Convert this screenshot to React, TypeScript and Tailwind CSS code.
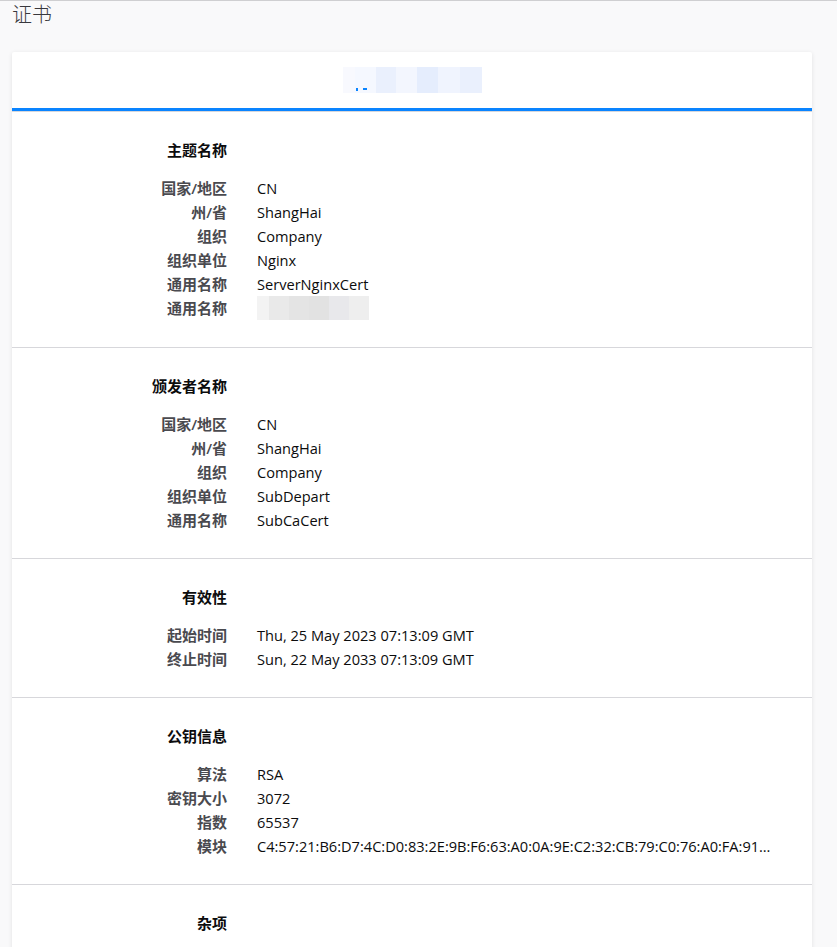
import React from 'react';

type Row = { label: string; value?: string; redacted?: boolean };
type Section = { title: string; rows: Row[] };

const sections: Section[] = [
  {
    title: '主题名称',
    rows: [
      { label: '国家/地区', value: 'CN' },
      { label: '州/省', value: 'ShangHai' },
      { label: '组织', value: 'Company' },
      { label: '组织单位', value: 'Nginx' },
      { label: '通用名称', value: 'ServerNginxCert' },
      { label: '通用名称', redacted: true },
    ],
  },
  {
    title: '颁发者名称',
    rows: [
      { label: '国家/地区', value: 'CN' },
      { label: '州/省', value: 'ShangHai' },
      { label: '组织', value: 'Company' },
      { label: '组织单位', value: 'SubDepart' },
      { label: '通用名称', value: 'SubCaCert' },
    ],
  },
  {
    title: '有效性',
    rows: [
      { label: '起始时间', value: 'Thu, 25 May 2023 07:13:09 GMT' },
      { label: '终止时间', value: 'Sun, 22 May 2033 07:13:09 GMT' },
    ],
  },
  {
    title: '公钥信息',
    rows: [
      { label: '算法', value: 'RSA' },
      { label: '密钥大小', value: '3072' },
      { label: '指数', value: '65537' },
      { label: '模块', value: 'C4:57:21:B6:D7:4C:D0:83:2E:9B:F6:63:A0:0A:9E:C2:32:CB:79:C0:76:A0:FA:91…' },
    ],
  },
  { title: '杂项', rows: [] },
];

const font = { fontFamily: '"Open Sans", "Noto Sans CJK SC", sans-serif' };

// blurred-out blocks, the screenshot had these pixelated
const Redacted: React.FC = () => (
  <div className="flex h-[24px] items-stretch">
    <div className="w-[12px] bg-[#f3f3f3]" />
    <div className="w-[20px] bg-[#e9e9e9]" />
    <div className="w-[20px] bg-[#e4e4e4]" />
    <div className="w-[20px] bg-[#e2e2e2]" />
    <div className="w-[20px] bg-[#e8e8eb]" />
    <div className="w-[20px] bg-[#eeeeee]" />
  </div>
);

const TabTitle: React.FC = () => (
  <div className="relative flex h-[26px] items-stretch">
    <div className="w-[12px] bg-[#f8f9fe]" />
    <div className="w-[21px] bg-[#f5f8ff]" />
    <div className="w-[20px] bg-[#eaf0fd]" />
    <div className="w-[21px] bg-[#f3f6fe]" />
    <div className="w-[21px] bg-[#e5edfd]" />
    <div className="w-[22px] bg-[#f0f4fe]" />
    <div className="w-[22px] bg-[#eaf0fd]" />
    <span className="absolute left-[13px] bottom-[2px] h-[3px] w-[2px] bg-[#0a84ff]" />
    <span className="absolute left-[20px] bottom-[3px] h-[2px] w-[4px] bg-[#0a84ff]" />
  </div>
);

export default function App() {
  return (
    <div className="min-h-[947px] border-t border-[#cfcfd1] bg-[#f9f9fa] text-[#15141a]" style={font}>
      <h1 className="px-[12px] pt-[1px] text-[20px] font-light leading-[26px] text-[#38383d]">证书</h1>
      <div className="mx-[12px] mt-[24px] w-[800px] rounded-t-[2px] bg-white shadow-[0_1px_4px_rgba(12,12,13,0.1)]">
        <div className="flex h-[56px] items-center justify-center">
          <TabTitle />
        </div>
        <div className="h-[3px] bg-[#0a84ff]" />
        {sections.map((s) => (
          <section key={s.title} className="border-t border-[#d7d7db] pt-[26px] pb-[26px] first-of-type:pb-[27px]">
            <div className="grid grid-cols-[215px_1fr] gap-x-[30px]">
              <h2 className="text-right text-[15px] font-bold leading-[24px] text-[#0c0c0d]">{s.title}</h2>
              <div />
            </div>
            {s.rows.length > 0 && (
              <div className="mt-[14px] grid grid-cols-[215px_1fr] gap-x-[30px]">
                {s.rows.map((r, i) => (
                  <React.Fragment key={i}>
                    <div className="text-right text-[15px] font-semibold leading-[24px] text-[#4a4a4f]">{r.label}</div>
                    {r.redacted ? (
                      <Redacted />
                    ) : (
                      <div className="whitespace-nowrap text-[14.6px] leading-[24px] text-[#0c0c0d]">{r.value}</div>
                    )}
                  </React.Fragment>
                ))}
              </div>
            )}
          </section>
        ))}
      </div>
    </div>
  );
}
